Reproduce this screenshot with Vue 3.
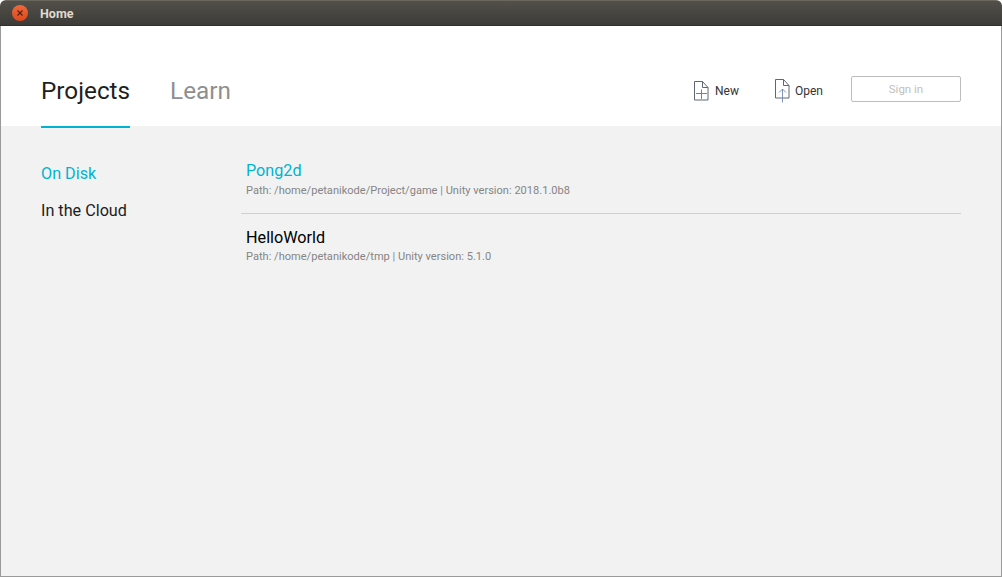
<template>
  <div class="window">
    <div class="titlebar">
      <button class="close">
        <svg width="8" height="8" viewBox="0 0 8 8">
          <path d="M1.5 1.5l5 5M6.5 1.5l-5 5" stroke="#4a2012" stroke-width="1.1" fill="none" />
        </svg>
      </button>
      <span class="title">Home</span>
    </div>

    <div class="header">
      <nav class="tabs">
        <a class="tab active">Projects</a>
        <a class="tab">Learn</a>
      </nav>
      <div class="actions">
        <a class="action new">
          <svg width="15" height="20" viewBox="0 0 15 20">
            <path d="M.5 .5h8l5.500 6v12.500h-13.500z" fill="#fff" stroke="#5f6675" />
            <path d="M8.500 .5v6h5.500" fill="none" stroke="#5f6675" />
            <path d="M7.500 8.500v9.500M2 12.500h11" stroke="#d0604a" fill="none" />
          </svg>
          <span>New</span>
        </a>
        <a class="action open">
          <svg width="15" height="24" viewBox="0 0 15 24">
            <path d="M.5 .5h8l5.500 6v12.500h-13.500z" fill="#fff" stroke="#5f6675" />
            <path d="M8.500 .5v6h5.500" fill="none" stroke="#5f6675" />
            <path d="M7.500 10v13.500M4 13.500l3.500-3.500 3.500 3.500" stroke="#7d93b8" fill="none" />
          </svg>
          <span>Open</span>
        </a>
        <button class="signin">Sign in</button>
      </div>
    </div>

    <div class="body">
      <aside class="side">
        <a class="side-item active">On Disk</a>
        <a class="side-item">In the Cloud</a>
      </aside>
      <div class="list">
        <div v-for="p in projects" :key="p.name" class="project">
          <div class="name" :class="{ active: p.active }">{{ p.name }}</div>
          <div class="meta">Path: {{ p.path }} | Unity version: {{ p.version }}</div>
        </div>
      </div>
    </div>
  </div>
</template>

<script setup>
const projects = [
  { name: "Pong2d", path: "/home/petanikode/Project/game", version: "2018.1.0b8", active: true },
  { name: "HelloWorld", path: "/home/petanikode/tmp", version: "5.1.0", active: false },
];
</script>

<style>
html,
body {
  margin: 0;
  background: #fff;
  overflow: hidden;
}
</style>

<style scoped>
.window {
  width: 1002px;
  height: 577px;
  box-sizing: border-box;
  display: flex;
  flex-direction: column;
  font-family: Roboto, "Liberation Sans", sans-serif;
  border-radius: 6px 6px 0 0;
  overflow: hidden;
  background: #f2f2f2;
  position: relative;
}
.window::after {
  content: "";
  position: absolute;
  inset: 26px 0 0 0;
  border: 1px solid #9a9a9a;
  border-top: 0;
  pointer-events: none;
}
.titlebar {
  height: 26px;
  flex: none;
  box-sizing: border-box;
  display: flex;
  align-items: center;
  padding-left: 12px;
  background: linear-gradient(#53504a, #3c3b37);
  border-top: 1px solid #6a675f;
  border-bottom: 1px solid #2f2e2b;
}
.close {
  width: 16px;
  height: 16px;
  padding: 0;
  border: 0;
  border-radius: 50%;
  background: linear-gradient(#f0683a, #dd4a1c);
  display: flex;
  align-items: center;
  justify-content: center;
}
.title {
  margin-left: 12px;
  font-size: 12.500px;
  font-weight: 700;
  color: #dfdbd2;
}
.header {
  height: 100px;
  flex: none;
  box-sizing: border-box;
  background: #fff;
  display: flex;
  justify-content: space-between;
  align-items: flex-end;
  padding: 0 41px;
}
.tabs {
  display: flex;
  gap: 40px;
  margin-bottom: -2px;
}
.tab {
  display: block;
  height: 52px;
  box-sizing: border-box;
  padding-top: 2px;
  font-size: 24.300px;
  line-height: 26px;
  color: #8f8f8f;
  border-bottom: 2px solid transparent;
}
.tab.active {
  color: #1f1f1f;
  border-bottom-color: #00b4cf;
}
.actions {
  display: flex;
  align-items: flex-start;
  height: 50px;
  font-size: 12px;
  color: #333;
}
.action {
  display: flex;
  align-items: center;
  height: 26px;
}
.action span {
  padding-top: 3px;
}
.new {
  margin-right: 36px;
}
.new svg {
  margin-right: 6px;
  margin-top: 3px;
}
.open {
  margin-right: 28px;
}
.open svg {
  margin-top: 4px;
  margin-right: 5px;
}
.signin {
  width: 110px;
  height: 26px;
  box-sizing: border-box;
  border: 1px solid #bdbdbd;
  border-radius: 2px;
  background: #fff;
  color: #c0c0c0;
  font: 11.500px Roboto, "Liberation Sans", sans-serif;
  padding: 0;
}
.body {
  flex: 1;
  display: flex;
  padding: 38px 41px 0;
}
.side {
  width: 200px;
  flex: none;
  display: flex;
  flex-direction: column;
  gap: 18px;
}
.side-item {
  font-size: 16.200px;
  line-height: 19px;
  color: #1c1c1c;
}
.side-item.active {
  color: #00b4cf;
}
.list {
  flex: 1;
  margin-top: -3px;
}
.project {
  box-sizing: border-box;
  padding: 0 5px 16px;
  border-bottom: 1px solid #d0d0d0;
}
.project + .project {
  padding-top: 14px;
  border-bottom: 0;
}
.project:first-child .meta {
  margin-top: 4px;
}
.name {
  font-size: 16.200px;
  line-height: 19px;
  color: #000;
}
.name.active {
  color: #00b4cf;
}
.meta {
  margin-top: 3px;
  font-size: 11.070px;
  line-height: 13px;
  color: #858585;
}
</style>
